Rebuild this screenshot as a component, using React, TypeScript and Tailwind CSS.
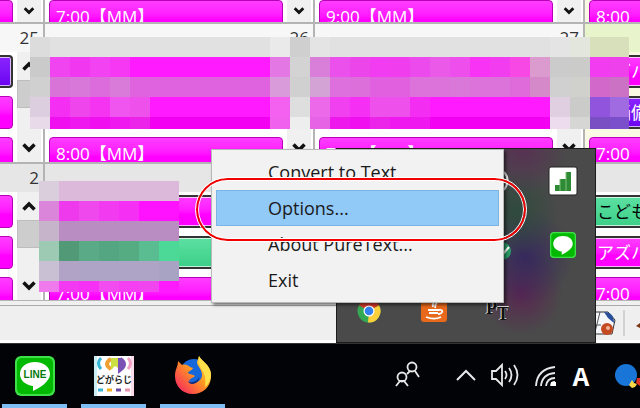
import React from 'react';

interface CalendarEvent {
  label: string;
  tone: 'pink' | 'violet' | 'green';
  selected?: boolean;
}

interface Day {
  id: string;
  date: string;
  events: CalendarEvent[];
  holiday?: boolean;
}

const pink = (label = '', selected = false): CalendarEvent => ({ label, tone: 'pink', selected });

const firstWeek: Day[] = [
  { id: 'w1a', date: '', events: [pink()] },
  { id: 'w1b', date: '', events: [pink('7:00【MM】')] },
  { id: 'w1c', date: '', events: [pink('9:00【MM】')] },
  { id: 'w1d', date: '', events: [pink('8:00【MM】')], holiday: true },
];

const secondWeek: Day[] = [
  { id: 'w2a', date: '25', events: [{ label: '', tone: 'violet', selected: true }, pink(), pink()] },
  { id: 'w2b', date: '26', events: [pink(), pink(), pink('8:00【MM】')] },
  { id: 'w2c', date: '27', events: [pink(), pink(), pink('7:00【MM】')] },
  {
    id: 'w2d',
    date: '',
    holiday: true,
    events: [pink('アズハ', true), { label: '　踊備', tone: 'violet', selected: true }, pink('7:00【MM】')],
  },
];

const thirdWeek: Day[] = [
  { id: 'w3a', date: '2', events: [pink(), pink(), pink()] },
  { id: 'w3b', date: '', events: [pink('', true), { label: '', tone: 'green', selected: true }, pink('7:00【MM】')] },
  { id: 'w3c', date: '', events: [pink(), pink(), pink()] },
  {
    id: 'w3d',
    date: '',
    events: [{ label: 'こどもの', tone: 'green', selected: true }, pink('アズハ', true), pink('7:00【MM】')],
  },
];

const tones = {
  pink: 'bg-linear-to-b from-[#ff3cff] to-[#ff00ff] to-60% text-white',
  violet: 'bg-linear-to-b from-[#8a22ff] to-[#6a00f0] text-white',
  green: 'bg-linear-to-b from-[#5be0a2] to-[#3ccf88] text-black',
};

const M = '#ff1aff';
const D = '#df62df';
const B = '#f300f3';
const G = '#e1e1e1';

const fill = (color: string, count: number) => Array<string>(count).fill(color);

const wideMosaic = [
  ['#dcdcdc', ...fill(G, 11), '#eaeaea', '#cfcfcf', '#e4e4e4', ...fill(G, 11), '#e4e4e4', '#e3e6dc', '#d8e0bb', '#d8e0bb'],
  ['#cacaca', '#f044f0', '#f237f0', '#f342f1', '#f638f4', ...fill(M, 7), '#e377e3', '#d3d3d3', '#d97fd9', '#ec50ec', '#ec46ea', '#f23cf1', '#f03ded', '#ec4aec', '#ea59e8', '#ee4fec', '#f833f6', '#f23cef', '#f748e6', '#dc9bcf', '#cbcbcb', '#cbcbc9', '#f23cef', '#ee41ec'],
  ['#d0d0d0', '#d873d8', '#d878d8', '#dc6cdc', '#d97bd9', ...fill(D, 7), '#da9bda', '#d0d0d0', '#d3a3d6', '#dd70dc', '#dd6fdb', '#e060df', '#e060df', '#dc73db', '#dc73db', '#d978d9', '#dc73db', '#dc73db', '#de6bd9', '#d589c8', '#d0d0d0', '#d0d0cd', '#d268c9', '#cc72c5'],
  ['#dccede', '#f52ef4', '#ee46ec', '#f434f1', '#f155ef', '#ee50ec', ...fill(M, 6), '#f461f0', '#dedede', '#ec69ea', '#f040ef', '#f52ff3', '#ee50ec', '#ee50ec', '#f32df2', ...fill(M, 6), '#e0cee1', '#cbcbc9', '#9155dd', '#a06be0'],
  ['#e8dae9', '#f010ef', '#ef18ee', '#f010ef', '#ef18ee', '#ec24ea', ...fill(B, 6), '#f061ee', '#eeeeee', '#e663e5', '#ee18ed', '#f010ef', '#ec24ea', '#ef18ee', '#ef18ee', ...fill(B, 6), '#ecdcee', '#d6d6d4', '#7b4fc4', '#7b4fcb'],
];

const smallMosaic = [
  ['#dacddc', ...fill('#dcb8da', 6)],
  ['#da85da', '#ee39ec', '#ef49ed', '#f23af0', '#f62ff4', '#ff12ff', '#ff12ff'],
  ['#c6b4cb', ...fill('#b98dc1', 6)],
  ['#9ccab2', '#529a77', '#5aaa88', '#54a581', '#55ac83', '#5abc91', '#4cd998'],
  ['#c9c0d3', '#b0a3c5', ...fill('#aea5c6', 4), '#a9a3c3'],
  ['#ee7aec', '#f339f1', '#f730f5', '#f24cf0', '#f53ff3', '#f145ef', '#ff1aff'],
];

// the last day runs on past the right edge of the window
const columns = 'grid grid-cols-[45px_270px_270px_270px]';

const EventBar: React.FC<{ event: CalendarEvent }> = ({ event }) => (
  <button
    type="button"
    aria-label={event.label || 'Event'}
    className={`block h-[33px] w-full shrink-0 overflow-hidden whitespace-nowrap rounded-sm text-left text-[17px] ${tones[event.tone]} ${
      event.selected
        ? 'border-2 border-[#333333] pl-1.5 leading-7 inset-ring inset-ring-white/70'
        : 'border border-[#b800b8] pl-1.5 leading-8'
    }`}
  >
    {event.label}
  </button>
);

const Chevron: React.FC<{ up?: boolean }> = ({ up }) => (
  <svg viewBox="0 0 24 28" className={`h-7 w-6 ${up ? 'rotate-180' : ''}`} fill="none" stroke="#111" strokeWidth="3.5">
    <path d="M6.500 10.500l5.500 5.500 5.500-5.500" />
  </svg>
);

const ScrollBar: React.FC<{ arrowOnly?: boolean }> = ({ arrowOnly }) => (
  <div className={`flex w-6 shrink-0 flex-col items-center bg-[#f0f0f0] ${arrowOnly ? 'justify-end' : 'justify-between'}`}>
    {!arrowOnly && (
      <div className="w-full">
        <Chevron up />
        <div className="h-7 border border-[#bdbdbd] bg-[#cdcdcd]" />
      </div>
    )}
    <Chevron />
  </div>
);

const DayCell: React.FC<{ day: Day; body: string; header?: string; arrowOnly?: boolean }> = ({ day, body, header, arrowOnly }) => (
  <div className={`min-w-0 border-r-2 border-[#b4b4b4] ${day.holiday ? 'bg-[#fafae4]' : 'bg-white'}`}>
    {header && (
      <div className={`h-7 pr-1 text-right text-[17px] leading-7 text-[#333] ${day.holiday ? 'bg-[#e8f5cc]' : header}`}>
        {day.date}
      </div>
    )}
    <div className={`flex gap-1 overflow-hidden pr-0.5 ${body}`}>
      <div
        className={`flex min-w-0 flex-1 flex-col gap-2 ${header ? 'pt-[3px]' : ''} ${day.id.endsWith('a') ? '-ml-1' : 'pl-1'}`}
      >
        {day.events.map((event, idx) => (
          <EventBar key={idx} event={event} />
        ))}
      </div>
      <ScrollBar arrowOnly={arrowOnly} />
    </div>
  </div>
);

const Mosaic: React.FC<{ rows: string[][]; className: string }> = ({ rows, className }) => (
  <div className={`absolute flex flex-col overflow-hidden ${className}`}>
    {rows.map((row, y) => (
      <div key={y} className="flex h-5 shrink-0">
        {row.map((color, x) => (
          <div key={x} className="w-5 shrink-0" style={{ backgroundColor: color }} />
        ))}
      </div>
    ))}
  </div>
);

const LineLogo: React.FC<{ className: string; text?: boolean }> = ({ className, text }) => (
  <svg viewBox="0 0 40 40" className={className}>
    <rect width="40" height="40" rx="6" fill="#3fe048" />
    <rect x="2" y="2" width="36" height="36" rx="5" fill="#00b900" />
    <path d="M20 6C11 6 5 11 5 18c0 6 5 11 13 12v5c6-3 17-9 17-17 0-7-6-12-15-12z" fill="#fff" />
    {text && (
      <text x="20" y="22" textAnchor="middle" fontSize="10" fontWeight="900" fontFamily="Liberation Sans, sans-serif" fill="#067a10">
        LINE
      </text>
    )}
  </svg>
);

const ChromeLogo = () => (
  <svg viewBox="0 0 24 24" className="size-6">
    <circle cx="12" cy="12" r="11.500" fill="#35a853" />
    <path d="M12 12L2 6.300A11.500 11.500 0 0 1 22 6.300z" fill="#df3a2c" />
    <path d="M12 12L22 6.300A11.500 11.500 0 0 1 11 23.500z" fill="#fbd03b" />
    <circle cx="12" cy="12" r="5.500" fill="#fff" />
    <circle cx="12" cy="12" r="4.300" fill="#347ff0" />
  </svg>
);

const JavaLogo = () => (
  <svg viewBox="0 0 26 26" className="size-6.5">
    <rect width="26" height="26" rx="3" fill="#e8691c" />
    <g fill="none" stroke="#fff" strokeWidth="1.800">
      <path d="M15 1c1 4-5 5-3 10M17 6c-4 2-2 3-3 6M7 14h11M8 17h9M5 21c5 2 11 2 15 0M18 14c5-1 4 4-1 4" />
    </g>
  </svg>
);

const FirefoxLogo = () => (
  <svg viewBox="0 0 36 38" className="h-9.5 w-9">
    <defs>
      <linearGradient id="fox" x1="1" y1="0" x2="0" y2="1">
        <stop offset="0" stopColor="#fff44f" />
        <stop offset="0.45" stopColor="#ff9a1f" />
        <stop offset="1" stopColor="#f5156c" />
      </linearGradient>
    </defs>
    <circle cx="19" cy="17" r="14" fill="#1667d9" />
    <path d="M24 0c2 5 11 8 12 18 1 11-7 20-18 20S0 30 0 20C0 13 3 11 3 5l4 4c3-1 6 0 8 2l3 1c-1 3-5 3-5 5 2 2 5 1 7 3-2 2-5 2-6 5 4 4 13 1 13-6 0-6-5-9-5-13z" fill="url(#fox)" />
    <path d="M24 0c2 5 11 8 12 18 0 6-3 11-6 13 1-7 0-13-3-17-3-5-4-9-3-14z" fill="#ffe04a" />
    <path d="M13 25c4 3 10 0 11-4 1 6-9 10-11 4z" fill="#0b2a80" />
  </svg>
);

const DogaLogo = () => (
  <svg viewBox="0 0 40 40" className="size-10">
    <rect width="40" height="40" fill="#fff" />
    <path d="M0 0h3v40H0z" fill="#c9eef5" />
    <path d="M37 0h3v40h-3z" fill="#fbdcea" />
    <g fill="none" strokeWidth="3">
      <path d="M7 2q-5 5 0 11" stroke="#36b6d6" />
      <path d="M17 3q-8 5 0 10" stroke="#f0a030" strokeWidth="4" />
      <path d="M26 2v12q8-6 0-11" stroke="#7a52b5" strokeWidth="4" />
      <path d="M34 2q5 5 0 11" stroke="#f2a0c4" />
    </g>
    <path d="M17 2h7v10l-3-2-4 4z" fill="#cde043" />
    <text x="20" y="27" textAnchor="middle" fontSize="9" fontWeight="700" fontFamily="Noto Sans CJK JP, sans-serif" fill="#222">
      どがらじ
    </text>
    <path d="M4 34h5" stroke="#36b6d6" strokeWidth="3" />
    <path d="M13 34h5" stroke="#f0b020" strokeWidth="3" />
    <path d="M22 34h5" stroke="#6a46a5" strokeWidth="3" />
    <path d="M31 34h5" stroke="#e895ae" strokeWidth="3" />
  </svg>
);

const TrayPopup = () => (
  <div className="absolute top-[148px] left-[336px] h-[195px] w-[260px] border border-[#1c1c1c] bg-[#4a4a4a] bg-[radial-gradient(circle_at_185px_0px,#5e2458aa,transparent_45px),radial-gradient(circle_at_178px_62px,#284a3acc,transparent_45px),radial-gradient(circle_at_188px_108px,#33245fdd,transparent_48px),radial-gradient(circle_at_184px_144px,#5c2052dd,transparent_42px)]">
    <button type="button" aria-label="Signal" className="absolute top-[17px] left-[211px] size-7.5">
      <svg viewBox="0 0 30 30">
        <rect x="1" y="1" width="28" height="28" rx="2" fill="#fff" stroke="#222" strokeWidth="1" />
        <path d="M7 19h5v6H7z M12 13h6v12h-6z M18 6h5v19h-5z" fill="#2f8a35" />
        <path d="M12 13v12M18 6v19" stroke="#7fbf7c" />
      </svg>
    </button>
    <button type="button" aria-label="LINE" className="absolute top-[83px] left-[213px]">
      <LineLogo className="size-6.5" />
    </button>
    <svg viewBox="0 0 24 110" className="absolute top-[14px] left-[151px] h-[110px] w-6" fill="none">
      <path d="M16 9q7 8 0 18" stroke="#eee" strokeWidth="2" />
      <circle cx="14" cy="88" r="9" fill="#2a9d66" />
      <path d="M14 92l7-8" stroke="#fff" strokeWidth="2" />
    </svg>
    <button type="button" aria-label="Chrome" className="absolute top-[150px] left-[20px]">
      <ChromeLogo />
    </button>
    <button type="button" aria-label="Java" className="absolute top-[147px] left-[84px]">
      <JavaLogo />
    </button>
    <button type="button" aria-label="PureText" className="absolute top-[149px] left-[149px] flex font-['Liberation_Serif',serif] text-lg leading-5 font-bold text-[#111]">
      <span className="[text-shadow:-1px_0_#ddd,0_-1px_#ddd]">P</span>
      <span className="pt-1.5 [text-shadow:-1px_0_#ddd,0_-1px_#ddd]">T</span>
    </button>
  </div>
);

const ContextMenu = () => (
  <div role="menu" className="absolute top-[149px] left-[211px] flex w-[293px] flex-col border border-[#b8b8b8] bg-[#f2f2f2] p-1 shadow-[2px_2px_3px_#00000088]">
    {['Convert to Text', 'Options...', 'About PureText...', 'Exit'].map((item) => (
      <button
        key={item}
        type="button"
        role="menuitem"
        className={`h-9 w-full border pl-[51px] text-left text-lg leading-8 text-[#1a1a1a] ${
          item === 'Options...' ? 'border-[#7db4e6] bg-[#91c9f7]' : 'border-transparent'
        }`}
      >
        {item}
      </button>
    ))}
  </div>
);

const TaskbarApp: React.FC<{ label: string; children: React.ReactNode }> = ({ label, children }) => (
  <button type="button" aria-label={label} className="flex h-full w-[65px] flex-col items-center justify-between pt-3">
    {children}
    <span className="h-1 w-full bg-[#7fbdf5]" />
  </button>
);

const Taskbar = () => (
  <footer className="flex h-[65px] justify-between border-t border-[#333] bg-[#010307]">
    <div className="flex gap-3.5 pl-0.5">
      <TaskbarApp label="LINE"><LineLogo className="size-10" text /></TaskbarApp>
      <TaskbarApp label="どがらじ"><DogaLogo /></TaskbarApp>
      <TaskbarApp label="Firefox"><FirefoxLogo /></TaskbarApp>
    </div>
    <svg viewBox="0 0 250 64" className="h-16 w-[250px]" fill="none" stroke="#e8e8e8" strokeWidth="1.800">
      <circle cx="22" cy="23" r="4.500" />
      <path d="M17 30l3-3M25 27l4 6" />
      <circle cx="12" cy="33" r="4.500" />
      <path d="M6 42l4-5h4l4 5" />
      <path d="M67 36l9-9 9 9" strokeWidth="2" />
      <path d="M102 27h4l6-6v20l-6-6h-4z" />
      <path d="M115 27q3 4 0 8M119 24q5 7 0 14M124 21q7 10 0 20" />
      <path d="M146 42q1-17 19-19M151 42q1-12 14-13M156 42q1-8 9-8M161 42q0-4 4-4" />
      <path d="M161 38h5v4h-5z" fill="#fff" stroke="none" />
      <text x="191" y="42" textAnchor="middle" fontSize="28" fontWeight="700" fontFamily="Liberation Mono, monospace" fill="#fff" stroke="none">
        A
      </text>
      <circle cx="236" cy="31" r="11" fill="#1976d8" stroke="none" />
      <path d="M242 36l2 3 3 1-2 3-3 1-3-3z" fill="#ffd94a" stroke="none" />
      <path d="M247 34h3v8l-4-3z" fill="#dd3526" stroke="none" />
    </svg>
  </footer>
);

const App: React.FC = () => {
  return (
    <div className="relative min-h-screen overflow-hidden bg-[#f0f0f0] font-['Open_Sans','Noto_Sans_CJK_JP',sans-serif]">
      <main className="overflow-hidden">
        <div className={`${columns} border-b-2 border-[#b4b4b4]`}>
          {firstWeek.map((day) => (
            <DayCell key={day.id} day={day} body="h-[22px]" arrowOnly />
          ))}
        </div>
        <div className={`${columns} border-b-2 border-[#b4b4b4]`}>
          {secondWeek.map((day) => (
            <DayCell key={day.id} day={day} header="bg-[#f7f7f7]" body="h-[110px]" />
          ))}
        </div>
        <div className={`${columns} border-b border-[#b4b4b4]`}>
          {thirdWeek.map((day) => (
            <DayCell key={day.id} day={day} header="bg-[#e6e6e6]" body="h-[108px]" />
          ))}
        </div>
      </main>

      {/* Status strip under the calendar */}
      <div className="mt-1 flex h-[38px] items-start justify-end border-t border-b-3 border-t-[#aaaaaa] border-b-white bg-[#efefef] pt-0.5">
        <svg viewBox="0 0 50 30" className="h-7.5 w-[50px]">
          <path d="M3 4h15l7 8-3 14H3z" fill="#f4f6fa" stroke="#333" />
          <path d="M10 4L5 24M3 17h8" stroke="#555" fill="none" />
          <path d="M14 4q10 0 10 11l-6-5z" fill="#2a4f9a" />
          <circle cx="17" cy="21" r="6" fill="#c44a22" />
          <circle cx="18" cy="20" r="2" fill="#f3b59c" />
          <path d="M34 2v26" stroke="#b5b5b5" />
          <path d="M46 18l4-3v5z" fill="#7b3512" />
        </svg>
      </div>

      <Taskbar />

      <Mosaic rows={wideMosaic} className="top-[37px] left-[30px] h-[92px] w-[599px]" />
      <Mosaic rows={smallMosaic} className="top-[181px] left-[39px] h-[111px] w-[140px]" />
      <TrayPopup />
      <ContextMenu />
      <div className="pointer-events-none absolute top-[178px] left-[196px] h-[63px] w-[330px] rounded-full border-2 border-[#f00000] shadow-[inset_0_0_0_1px_#ffffff] outline outline-white" />
    </div>
  );
};

export default App;
